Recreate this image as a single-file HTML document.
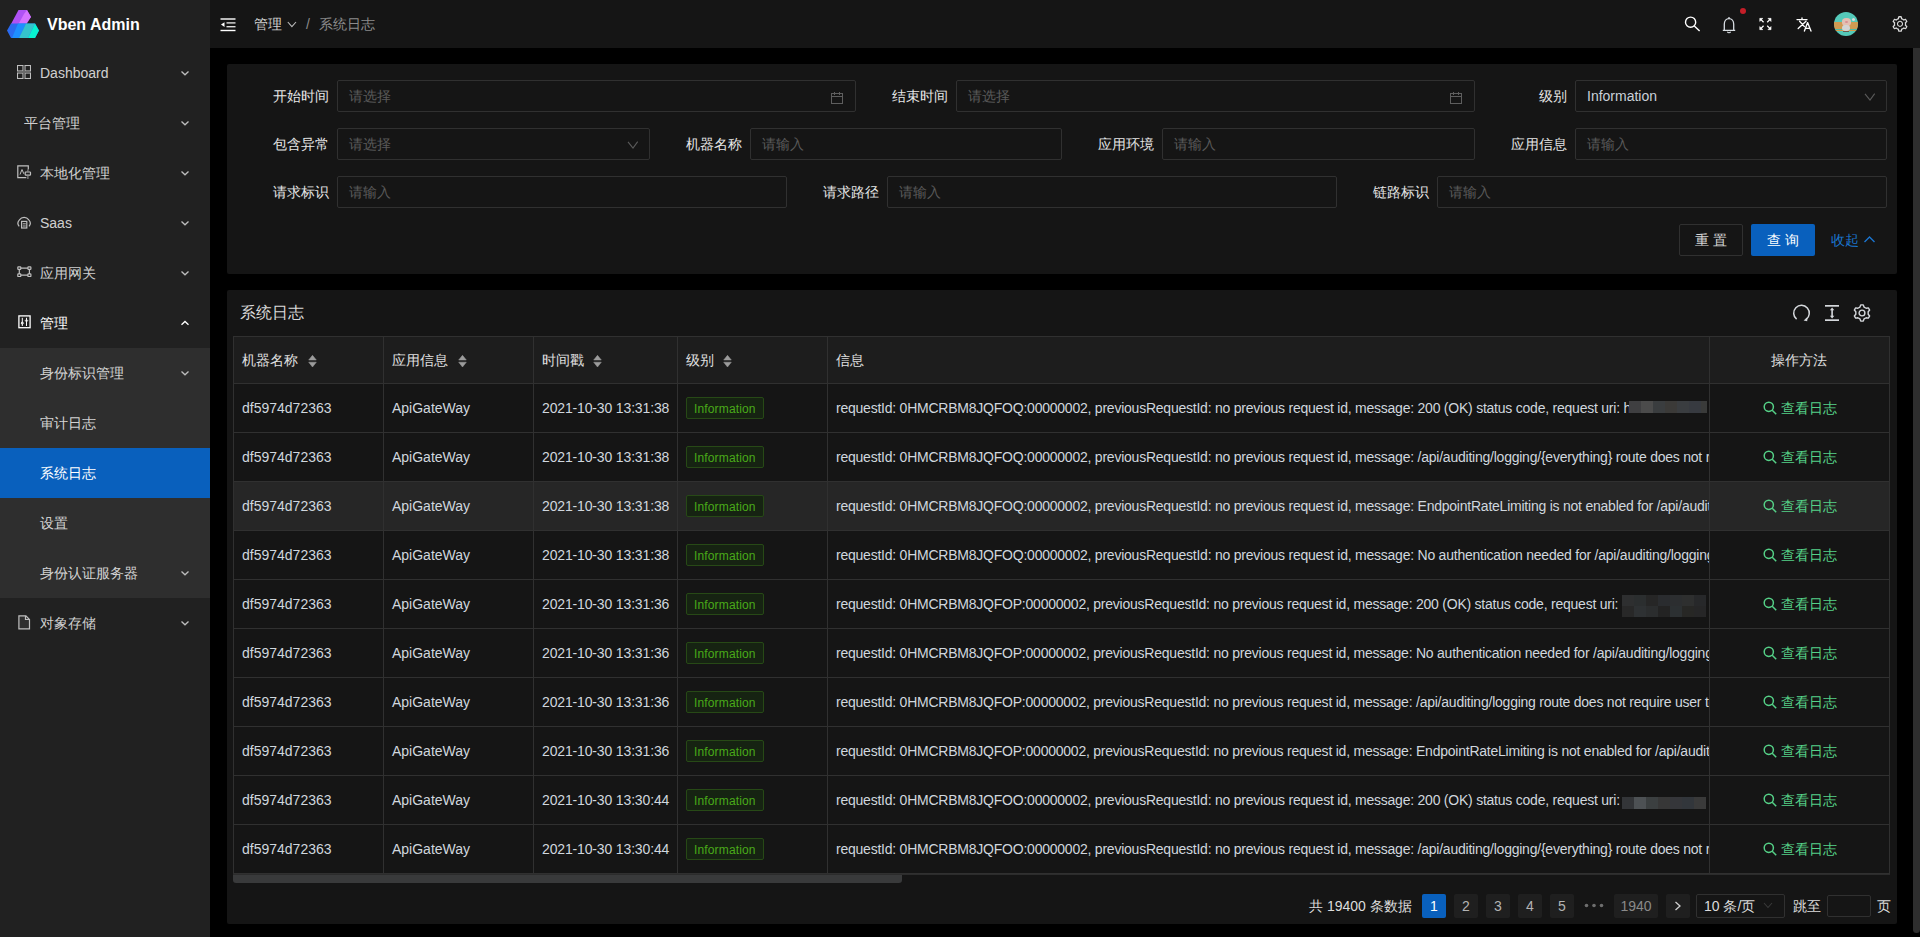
<!DOCTYPE html>
<html><head><meta charset="utf-8">
<style>
*{margin:0;padding:0;box-sizing:border-box}
html,body{width:1920px;height:937px;overflow:hidden;background:#000;font-family:"Liberation Sans",sans-serif;font-size:14px;color:#c9d1d9}
.abs{position:absolute}
#side{position:absolute;left:0;top:0;width:210px;height:937px;background:#212121}
#sub{position:absolute;left:0;top:348px;width:210px;height:250px;background:#2e2e2e}
.mi{position:absolute;left:0;width:210px;height:50px;line-height:50px;color:rgba(255,255,255,.7);font-size:14px;white-space:nowrap}
.mi .t{position:absolute;left:40px;top:0}
.mi svg.ic{position:absolute;left:17px;top:18px}
.mi svg.ch{position:absolute;left:179px;top:21px}
#hdr{position:absolute;left:210px;top:0;width:1710px;height:48px;background:#151515}
.card{position:absolute;background:#151515;border-radius:2px}
.lbl{position:absolute;height:32px;line-height:32px;color:#e6e6e6;text-align:right;white-space:nowrap}
.inp{position:absolute;height:32px;border:1px solid #303030;border-radius:2px;line-height:30px;padding-left:11px;color:#5a5a5a;white-space:nowrap}
.btn{position:absolute;height:32px;line-height:30px;border-radius:2px;text-align:center;white-space:nowrap}
.th{line-height:20px;color:#e0e0e0;white-space:nowrap}
.td{line-height:20px;color:#d0d7de;white-space:nowrap}
.tag{height:22px;line-height:22px;letter-spacing:.15px;padding:0 7px;font-size:12px;color:#49aa19;background:#162312;border:1px solid #274916;border-radius:2px;white-space:nowrap}
.pg{top:894px;width:24px;height:24px;line-height:24px;text-align:center;background:#1f1f1f;color:#b4b4b4;border-radius:2px}
#scrollv{position:absolute;left:1913px;top:48px;width:7px;height:885px;background:#2e2e2e;border-radius:0 0 4px 4px}
</style></head>
<body>
<!-- SIDEBAR -->
<div id="side">
  <svg class="abs" style="left:7px;top:9px" width="33" height="30" viewBox="0 0 33 30">
    <polygon points="4,15 11.5,1 20,1 24,8 18,15" fill="#b052f5"/>
    <polygon points="11.5,15 17,5 20,1 24,8 19.5,15" fill="#d673ff"/>
    <polygon points="4,14.5 28,14.5 32,21.5 28,29 4,29 0,21.5" fill="#2a6bf0"/>
    <polygon points="11,14.5 19,14.5 12,29 5,29" fill="#1e8fff"/>
    <polygon points="19,14.5 28,14.5 21,29 12,29" fill="#35c3cb"/>
    <polygon points="28,14.5 32,21.5 28,29 21,29" fill="#08f2d0"/>
  </svg>
  <div class="abs" style="left:47px;top:15px;font-size:16px;font-weight:bold;color:#fff;line-height:20px">Vben Admin</div>
  <div class="abs" style="left:40px;top:48px;height:50px;line-height:50px;color:rgba(255,255,255,.8);white-space:nowrap">Dashboard</div><svg class="abs" style="left:17px;top:65px" width="14" height="14" viewBox="0 0 14 14" fill="none" stroke="#bfbfbf" stroke-width="1.1"><rect x="0.5" y="0.5" width="5.5" height="5.5"/><rect x="8" y="0.5" width="5.5" height="5.5"/><rect x="0.5" y="8" width="5.5" height="5.5"/><rect x="8" y="8" width="5.5" height="5.5"/><path d="M7 1v12M1 7h12" stroke="#6a6a6a" stroke-width="1.6"/></svg><svg class="abs" style="left:178px;top:70px" width="14" height="8" viewBox="0 0 14 8"><polyline points="3.5,1.5 7,4.8 10.5,1.5" fill="none" stroke="#bdbdbd" stroke-width="1.3"/></svg><div class="abs" style="left:24px;top:98px;height:50px;line-height:50px;color:rgba(255,255,255,.8);white-space:nowrap">平台管理</div><svg class="abs" style="left:178px;top:120px" width="14" height="8" viewBox="0 0 14 8"><polyline points="3.5,1.5 7,4.8 10.5,1.5" fill="none" stroke="#bdbdbd" stroke-width="1.3"/></svg><div class="abs" style="left:40px;top:148px;height:50px;line-height:50px;color:rgba(255,255,255,.8);white-space:nowrap">本地化管理</div><svg class="abs" style="left:17px;top:165px" width="15" height="15" viewBox="0 0 15 15" fill="none" stroke="#bfbfbf" stroke-width="1.2"><path d="M11.3 4.5V0.8H0.8v11.9h8.5"/><path d="M3 9.5l2-5 1.8 4.3" stroke-width="1"/><rect x="8.2" y="7" width="5.3" height="3.2" rx="0.6"/><path d="M10.9 4.5v2.5M10.9 10.2v3.8" stroke="#8a8a8a"/></svg><svg class="abs" style="left:178px;top:170px" width="14" height="8" viewBox="0 0 14 8"><polyline points="3.5,1.5 7,4.8 10.5,1.5" fill="none" stroke="#bdbdbd" stroke-width="1.3"/></svg><div class="abs" style="left:40px;top:198px;height:50px;line-height:50px;color:rgba(255,255,255,.8);white-space:nowrap">Saas</div><svg class="abs" style="left:17px;top:215px" width="15" height="14" viewBox="0 0 15 14" fill="none" stroke="#bfbfbf" stroke-width="1.2"><path d="M2.2 11.3C0.6 9.5 0.6 6.8 2.4 4.8 3.6 3.2 5.3 2.4 7.1 2.4s3.5.8 4.7 2.4c1.8 2 1.8 4.7.2 6.5"/><rect x="4.6" y="6.4" width="5.2" height="6.6"/><path d="M5.8 8.8h3M5.8 11h3" stroke-width="1"/></svg><svg class="abs" style="left:178px;top:220px" width="14" height="8" viewBox="0 0 14 8"><polyline points="3.5,1.5 7,4.8 10.5,1.5" fill="none" stroke="#bdbdbd" stroke-width="1.3"/></svg><div class="abs" style="left:40px;top:248px;height:50px;line-height:50px;color:rgba(255,255,255,.8);white-space:nowrap">应用网关</div><svg class="abs" style="left:17px;top:266px" width="15" height="12" viewBox="0 0 15 12" fill="none" stroke="#bfbfbf" stroke-width="1.2"><rect x="0.8" y="0.8" width="3" height="2.6" rx=".6"/><rect x="10.9" y="0.8" width="3" height="2.6" rx=".6"/><rect x="0.8" y="7.9" width="3" height="2.6" rx=".6"/><rect x="10.9" y="7.9" width="3" height="2.6" rx=".6"/><path d="M3.8 2.1h7.1M3.8 9.2h7.1M2.3 3.4v4.5M12.4 3.4v4.5"/></svg><svg class="abs" style="left:178px;top:270px" width="14" height="8" viewBox="0 0 14 8"><polyline points="3.5,1.5 7,4.8 10.5,1.5" fill="none" stroke="#bdbdbd" stroke-width="1.3"/></svg><div class="abs" style="left:40px;top:298px;height:50px;line-height:50px;color:#fff;white-space:nowrap">管理</div><svg class="abs" style="left:18px;top:315px" width="13" height="14" viewBox="0 0 13 14" fill="none" stroke="#fff" stroke-width="1.3"><rect x="0.9" y="0.9" width="11.2" height="11.8"/><path d="M4.3 2.8v8.2M8.5 2.8v8.2" stroke-width="1"/><path d="M4.3 6.8l1.2 1.3-1.2 1.3-1.2-1.3z M8.5 4.3l1.2 1.3-1.2 1.3-1.2-1.3z" stroke-width="1"/></svg><svg class="abs" style="left:178px;top:320px" width="14" height="8" viewBox="0 0 14 8"><polyline points="3.5,4.8 7,1.5 10.5,4.8" fill="none" stroke="#fff" stroke-width="1.3"/></svg><div class="abs" style="left:0;top:348px;width:210px;height:250px;background:#2e2e2e"></div><div class="abs" style="left:0;top:448px;width:210px;height:50px;background:#0960bd"></div><div class="abs" style="left:40px;top:348px;height:50px;line-height:50px;color:rgba(255,255,255,.8);white-space:nowrap">身份标识管理</div><svg class="abs" style="left:178px;top:370px" width="14" height="8" viewBox="0 0 14 8"><polyline points="3.5,1.5 7,4.8 10.5,1.5" fill="none" stroke="#bdbdbd" stroke-width="1.3"/></svg><div class="abs" style="left:40px;top:398px;height:50px;line-height:50px;color:rgba(255,255,255,.8);white-space:nowrap">审计日志</div><div class="abs" style="left:40px;top:448px;height:50px;line-height:50px;color:#fff;white-space:nowrap">系统日志</div><div class="abs" style="left:40px;top:498px;height:50px;line-height:50px;color:rgba(255,255,255,.8);white-space:nowrap">设置</div><div class="abs" style="left:40px;top:548px;height:50px;line-height:50px;color:rgba(255,255,255,.8);white-space:nowrap">身份认证服务器</div><svg class="abs" style="left:178px;top:570px" width="14" height="8" viewBox="0 0 14 8"><polyline points="3.5,1.5 7,4.8 10.5,1.5" fill="none" stroke="#bdbdbd" stroke-width="1.3"/></svg><div class="abs" style="left:40px;top:598px;height:50px;line-height:50px;color:rgba(255,255,255,.8);white-space:nowrap">对象存储</div><svg class="abs" style="left:18px;top:615px" width="13" height="15" viewBox="0 0 13 15" fill="none" stroke="#bfbfbf" stroke-width="1.2"><path d="M0.9 0.9h7l3.6 3.6v9.3H0.9z" fill="#2f2f2f"/><path d="M7.5 0.9v3.6h4"/></svg><svg class="abs" style="left:178px;top:620px" width="14" height="8" viewBox="0 0 14 8"><polyline points="3.5,1.5 7,4.8 10.5,1.5" fill="none" stroke="#bdbdbd" stroke-width="1.3"/></svg>
</div>
<div id="hdr"></div>
<svg class="abs" style="left:220px;top:17px" width="16" height="15" viewBox="0 0 16 15" fill="#fff"><rect x="0.5" y="1.3" width="15" height="1.4"/><rect x="6.5" y="5.2" width="9" height="1.4" fill="#ddd"/><rect x="6.5" y="9" width="9" height="1.4" fill="#ddd"/><rect x="0.5" y="12.8" width="15" height="1.4"/><polygon points="1,7.6 4.5,5.2 4.5,10"/></svg>
<div class="abs" style="left:254px;top:14px;line-height:20px;color:#d0d0d0">管理</div>
<svg class="abs" style="left:286px;top:20px" width="12" height="9" viewBox="0 0 12 9"><polyline points="1.8,2 5.9,6.6 10,2" fill="none" stroke="#bbb" stroke-width="1.1"/></svg>
<div class="abs" style="left:306px;top:14px;line-height:20px;color:#8b8b8b">/</div>
<div class="abs" style="left:319px;top:14px;line-height:20px;color:#8b8b8b">系统日志</div>
<svg class="abs" style="left:1683px;top:15px" width="18" height="18" viewBox="0 0 18 18" fill="none" stroke="#fff" stroke-width="1.4"><circle cx="7.6" cy="7.2" r="5.1"/><path d="M11.3 11l5.3 5"/></svg>
<svg class="abs" style="left:1722px;top:16px" width="14" height="18" viewBox="0 0 14 18" fill="none" stroke="#d8dde2" stroke-width="1.3"><path d="M2.3 14.3V8.2C2.3 5 4.3 2.7 7 2.7s4.7 2.3 4.7 5.5v6.1M0.8 14.3h12.4"/><path d="M7 1v1.7" stroke-width="1.3"/><path d="M5.4 15.8a1.7 1.5 0 0 0 3.2 0" stroke-width="1.1"/></svg>
<div class="abs" style="left:1740px;top:8px;width:6px;height:6px;border-radius:50%;background:#c41e28"></div>
<svg class="abs" style="left:1757px;top:16px" width="16" height="16" viewBox="0 0 16 16" fill="#fff" stroke="#fff" stroke-width="1.5"><g transform="translate(8.4 8) scale(.87) translate(-8.3 -8.1)"><path d="M3 2.8l3.2 3.2M13.6 2.8l-3.2 3.2M3 13.4l3.2-3.2M13.6 13.4l-3.2-3.2" fill="none"/><path d="M1.8 1.6h3.6L1.8 5.2zM14.8 1.6h-3.6l3.6 3.6zM1.8 14.6h3.6L1.8 11zM14.8 14.6h-3.6l3.6-3.6z" stroke-width="0.6" stroke-linejoin="round"/></g></svg>
<svg class="abs" style="left:1790px;top:8px" width="26" height="30" viewBox="1790 8 26 30" fill="none" stroke="#fff" stroke-width="1.35" stroke-linecap="round"><path d="M1797 19.6H1807M1802 17.9v1.7M1799.6 21.3l4.8 5.3M1806 21.3l-7.8 7.2"/><path d="M1804.4 31l3.2-8.4 3.4 8.4M1805.5 28.4h4.3" stroke-linejoin="round"/></svg>
<div class="abs" style="left:1834px;top:12px;width:24px;height:24px;border-radius:50%;background:#54c9b9;overflow:hidden">
  <div class="abs" style="left:0;top:9.5px;width:24px;height:7px;background:#cf9a52"></div>
  <div class="abs" style="left:1px;top:16.5px;width:22px;height:2px;background:#4fb8a6"></div>
  <div class="abs" style="left:1px;top:18.3px;width:22px;height:1px;background:#d39c4c"></div>
  <div class="abs" style="left:7.5px;top:5.5px;width:9px;height:8px;border-radius:45%;background:#e3bfb2"></div>
  <div class="abs" style="left:10.5px;top:8.5px;width:3px;height:2px;border-radius:50%;background:#d88f92"></div>
  <div class="abs" style="left:8px;top:12.5px;width:8px;height:6px;border-radius:3px;background:#d4d4d4"></div>
  <div class="abs" style="left:9px;top:18.5px;width:6px;height:1.5px;background:#6a5a4c"></div>
  <div class="abs" style="left:17.5px;top:5.5px;width:3.5px;height:3.5px;border-radius:50%;background:#dcdcdc"></div>
</div>
<svg class="abs" style="left:1891px;top:15px" width="18" height="18" viewBox="0 0 1024 1024" fill="#d9d9d9"><path d="M924.8 625.7l-65.5-56c3.1-19 4.7-38.4 4.7-57.8s-1.6-38.8-4.7-57.8l65.5-56a32.030 32.030 0 0 0 9.3-35.200l-.9-2.600a443.740 443.740 0 0 0-79.700-137.900l-1.800-2.100a32.120 32.120 0 0 0-35.100-9.500l-81.300 28.900c-30-24.600-63.500-44-99.700-57.600l-15.700-85a32.050 32.050 0 0 0-25.800-25.700l-2.700-.5c-52.100-9.400-106.900-9.400-159 0l-2.700.5a32.050 32.050 0 0 0-25.800 25.700l-15.800 85.400a351.860 351.860 0 0 0-99 57.400l-81.900-29.100a32 32 0 0 0-35.100 9.500l-1.800 2.100a446.020 446.020 0 0 0-79.700 137.900l-.9 2.600c-4.500 12.500-.8 26.500 9.300 35.200l66.300 56.600c-3.100 18.800-4.600 38-4.600 57.100 0 19.200 1.500 38.400 4.600 57.100L99 625.500a32.030 32.030 0 0 0-9.300 35.200l.9 2.600c18.100 50.400 44.900 96.900 79.700 137.900l1.800 2.100a32.120 32.120 0 0 0 35.100 9.500l81.900-29.100c29.800 24.500 63.100 43.900 99 57.400l15.800 85.400a32.050 32.050 0 0 0 25.800 25.700l2.700.5a449.400 449.400 0 0 0 159 0l2.700-.5a32.050 32.050 0 0 0 25.800-25.700l15.700-85a350 350 0 0 0 99.700-57.600l81.300 28.900a32 32 0 0 0 35.100-9.500l1.800-2.100c34.800-41.100 61.600-87.500 79.700-137.900l.9-2.600c4.500-12.300.8-26.300-9.300-35zM788.300 465.900c2.500 15.100 3.800 30.600 3.800 46.100s-1.300 31-3.800 46.100l-6.600 40.100 74.700 63.900a370.030 370.030 0 0 1-42.600 73.600L721 702.800l-31.400 25.800c-23.900 19.600-50.500 35-79.300 45.800l-38.100 14.300-17.900 97a377.500 377.500 0 0 1-85 0l-17.900-97.200-37.800-14.500c-28.500-10.800-55-26.200-78.700-45.700l-31.400-25.900-93.400 33.200c-17-22.900-31.200-47.600-42.600-73.600l75.500-64.500-6.500-40c-2.400-14.900-3.700-30.300-3.700-45.500 0-15.300 1.200-30.600 3.700-45.500l6.500-40-75.500-64.500c11.300-26.100 25.600-50.700 42.600-73.600l93.400 33.200 31.400-25.900c23.700-19.500 50.200-34.900 78.700-45.700l37.900-14.300 17.900-97.200c28.100-3.200 56.800-3.200 85 0l17.900 97 38.100 14.300c28.700 10.800 55.400 26.200 79.300 45.800l31.400 25.800 92.800-32.900c17 22.900 31.200 47.600 42.600 73.600L781.800 426l6.500 39.900zM512 326c-97.200 0-176 78.800-176 176s78.800 176 176 176 176-78.800 176-176-78.800-176-176-176zm79.200 255.200A111.600 111.600 0 0 1 512 614c-29.900 0-58-11.700-79.200-32.800A111.600 111.600 0 0 1 400 502c0-29.900 11.700-58 32.800-79.200C454 401.600 482.100 390 512 390c29.900 0 58 11.600 79.200 32.800A111.600 111.600 0 0 1 624 502c0 29.900-11.700 58-32.800 79.200z"/></svg>

<div class="card" style="left:227px;top:64px;width:1670px;height:210px"></div>
<div class="lbl" style="left:229px;width:100px;top:80px;padding-right:0">开始时间</div><div class="inp" style="left:337px;top:80px;width:519px">请选择</div><svg class="abs" style="left:830px;top:91px" width="14" height="14" viewBox="0 0 14 14" fill="none" stroke="#5e5e5e" stroke-width="1"><rect x="1.5" y="2.5" width="11" height="10"/><path d="M1.5 5.5h11M4.5 1v3M9.5 1v3"/></svg><div class="lbl" style="left:848px;width:100px;top:80px;padding-right:0">结束时间</div><div class="inp" style="left:956px;top:80px;width:519px">请选择</div><svg class="abs" style="left:1449px;top:91px" width="14" height="14" viewBox="0 0 14 14" fill="none" stroke="#5e5e5e" stroke-width="1"><rect x="1.5" y="2.5" width="11" height="10"/><path d="M1.5 5.5h11M4.5 1v3M9.5 1v3"/></svg><div class="lbl" style="left:1467px;width:100px;top:80px;padding-right:0">级别</div><div class="inp" style="left:1575px;top:80px;width:312px"><span style="color:#c9d1d9">Information</span></div><svg class="abs" style="left:1864px;top:92.5px" width="12" height="8" viewBox="0 0 12 8"><polyline points="1,0.8 6,7 10.7,0.6" fill="none" stroke="#5a5a5a" stroke-width="1.1"/></svg><div class="lbl" style="left:229px;width:100px;top:128px;padding-right:0">包含异常</div><div class="inp" style="left:337px;top:128px;width:313px">请选择</div><svg class="abs" style="left:627px;top:140.5px" width="12" height="8" viewBox="0 0 12 8"><polyline points="1,0.8 6,7 10.7,0.6" fill="none" stroke="#5a5a5a" stroke-width="1.1"/></svg><div class="lbl" style="left:642px;width:100px;top:128px;padding-right:0">机器名称</div><div class="inp" style="left:750px;top:128px;width:312px">请输入</div><div class="lbl" style="left:1054px;width:100px;top:128px;padding-right:0">应用环境</div><div class="inp" style="left:1162px;top:128px;width:313px">请输入</div><div class="lbl" style="left:1467px;width:100px;top:128px;padding-right:0">应用信息</div><div class="inp" style="left:1575px;top:128px;width:312px">请输入</div><div class="lbl" style="left:229px;width:100px;top:176px;padding-right:0">请求标识</div><div class="inp" style="left:337px;top:176px;width:450px">请输入</div><div class="lbl" style="left:779px;width:100px;top:176px;padding-right:0">请求路径</div><div class="inp" style="left:887px;top:176px;width:450px">请输入</div><div class="lbl" style="left:1329px;width:100px;top:176px;padding-right:0">链路标识</div><div class="inp" style="left:1437px;top:176px;width:450px">请输入</div><div class="btn" style="left:1679px;top:224px;width:64px;border:1px solid #303030;color:#d6d6d6">重 置</div><div class="btn" style="left:1751px;top:224px;width:64px;background:#0960bd;color:#fff;line-height:32px">查 询</div><div class="abs" style="left:1831px;top:230px;line-height:20px;color:#1b75d0">收起</div><svg class="abs" style="left:1863px;top:235px" width="13" height="9" viewBox="0 0 13 9"><polyline points="1.5,7 6.5,2 11.5,7" fill="none" stroke="#1b75d0" stroke-width="1.4"/></svg>





















<!--TABLE-->
<div class="card" style="left:227px;top:290px;width:1670px;height:634px"></div>
<div class="abs" style="left:240px;top:303px;font-size:16px;line-height:20px;color:#d9d9d9">系统日志</div>
<svg class="abs" style="left:1792px;top:304px" width="19" height="19" viewBox="0 0 19 19" fill="none" stroke="#d5d8dc" stroke-width="1.5"><path d="M4.6 15.2A7.8 7.8 0 1 1 14.1 15.4"/><polygon points="15.6,13 15.2,17.2 11.6,16.4" fill="#d5d8dc" stroke="none"/></svg>
<svg class="abs" style="left:1825px;top:304px" width="15" height="18" viewBox="0 0 15 18" fill="#d5d8dc"><rect x="0" y="1" width="14" height="1.7"/><rect x="0" y="15.3" width="14" height="1.7"/><rect x="6.3" y="5" width="1.6" height="8"/><polygon points="7.1,3.6 9.3,6.2 4.9,6.2"/><polygon points="7.1,14.4 9.3,11.8 4.9,11.8"/></svg>
<svg class="abs" style="left:1853px;top:304px" width="18" height="18" viewBox="0 0 18 18" fill="none" stroke="#d5d8dc" stroke-width="1.4" stroke-linejoin="round"><path d="M7.72,0.90 L10.28,0.90 L11.05,3.04 L13.13,4.25 L15.37,3.84 L16.66,6.06 L15.18,7.80 L15.18,10.20 L16.66,11.94 L15.37,14.16 L13.13,13.75 L11.05,14.96 L10.28,17.10 L7.72,17.10 L6.95,14.96 L4.87,13.75 L2.63,14.16 L1.34,11.94 L2.82,10.20 L2.82,7.80 L1.34,6.06 L2.63,3.84 L4.87,4.25 L6.95,3.04Z"/><circle cx="9" cy="9" r="2.9"/></svg>
<div class="abs" style="left:233px;top:336px;width:1657px;height:47px;background:#1d1d1d"></div>
<div class="abs" style="left:233px;top:482px;width:1657px;height:48px;background:#262626"></div>
<div class="abs" style="left:233px;top:336px;width:1657px;height:1px;background:#303030"></div>
<div class="abs" style="left:233px;top:383px;width:1657px;height:1px;background:#303030"></div>
<div class="abs" style="left:233px;top:432px;width:1657px;height:1px;background:#303030"></div>
<div class="abs" style="left:233px;top:481px;width:1657px;height:1px;background:#303030"></div>
<div class="abs" style="left:233px;top:530px;width:1657px;height:1px;background:#303030"></div>
<div class="abs" style="left:233px;top:579px;width:1657px;height:1px;background:#303030"></div>
<div class="abs" style="left:233px;top:628px;width:1657px;height:1px;background:#303030"></div>
<div class="abs" style="left:233px;top:677px;width:1657px;height:1px;background:#303030"></div>
<div class="abs" style="left:233px;top:726px;width:1657px;height:1px;background:#303030"></div>
<div class="abs" style="left:233px;top:775px;width:1657px;height:1px;background:#303030"></div>
<div class="abs" style="left:233px;top:824px;width:1657px;height:1px;background:#303030"></div>
<div class="abs" style="left:233px;top:873px;width:1657px;height:1px;background:#303030"></div>
<div class="abs" style="left:233px;top:336px;width:1px;height:537px;background:#303030"></div>
<div class="abs" style="left:383px;top:336px;width:1px;height:537px;background:#303030"></div>
<div class="abs" style="left:533px;top:336px;width:1px;height:537px;background:#303030"></div>
<div class="abs" style="left:677px;top:336px;width:1px;height:537px;background:#303030"></div>
<div class="abs" style="left:827px;top:336px;width:1px;height:537px;background:#303030"></div>
<div class="abs" style="left:1709px;top:336px;width:1px;height:537px;background:#303030"></div>
<div class="abs" style="left:1889px;top:336px;width:1px;height:537px;background:#303030"></div>
<div class="abs" style="left:233px;top:874px;width:1657px;height:1px;background:#2c2c2c"></div>
<div class="abs" style="left:233px;top:875px;width:669px;height:8px;background:#393a3b;border-radius:0 0 3px 3px"></div>
<div class="abs th" style="left:242px;top:350px">机器名称</div>
<svg class="abs" style="left:308px;top:355px" width="9" height="13" viewBox="0 0 9 13" fill="#9c9c9c" stroke="#9c9c9c" stroke-width=".5" stroke-linejoin="round"><polygon points="4.5,0.3 8.3,5 0.7,5"/><polygon points="4.5,12 8.3,7.2 0.7,7.2"/></svg>
<div class="abs th" style="left:392px;top:350px">应用信息</div>
<svg class="abs" style="left:458px;top:355px" width="9" height="13" viewBox="0 0 9 13" fill="#9c9c9c" stroke="#9c9c9c" stroke-width=".5" stroke-linejoin="round"><polygon points="4.5,0.3 8.3,5 0.7,5"/><polygon points="4.5,12 8.3,7.2 0.7,7.2"/></svg>
<div class="abs th" style="left:542px;top:350px">时间戳</div>
<svg class="abs" style="left:593px;top:355px" width="9" height="13" viewBox="0 0 9 13" fill="#9c9c9c" stroke="#9c9c9c" stroke-width=".5" stroke-linejoin="round"><polygon points="4.5,0.3 8.3,5 0.7,5"/><polygon points="4.5,12 8.3,7.2 0.7,7.2"/></svg>
<div class="abs th" style="left:686px;top:350px">级别</div>
<svg class="abs" style="left:723px;top:355px" width="9" height="13" viewBox="0 0 9 13" fill="#9c9c9c" stroke="#9c9c9c" stroke-width=".5" stroke-linejoin="round"><polygon points="4.5,0.3 8.3,5 0.7,5"/><polygon points="4.5,12 8.3,7.2 0.7,7.2"/></svg>
<div class="abs th" style="left:836px;top:350px">信息</div>
<div class="abs th" style="left:1771px;top:350px">操作方法</div>
<div class="abs td" style="left:242px;top:398px">df5974d72363</div>
<div class="abs td" style="left:392px;top:398px">ApiGateWay</div>
<div class="abs td" style="left:542px;top:398px;letter-spacing:-.15px">2021-10-30 13:31:38</div>
<div class="abs tag" style="left:686px;top:397px">Information</div>
<div class="abs td" style="left:836px;top:398px;width:873px;overflow:hidden;letter-spacing:-.23px">requestId: 0HMCRBM8JQFOQ:00000002, previousRequestId: no previous request id, message: 200 (OK) status code, request uri: h</div>
<svg class="abs" style="left:1763px;top:401px" width="14" height="14" viewBox="0 0 14 14" fill="none" stroke="#55d187" stroke-width="1.5"><circle cx="5.8" cy="5.8" r="4.6"/><path d="M9.2 9.2l4 4"/></svg>
<div class="abs td" style="left:1781px;top:398px;color:#55d187">查看日志</div>
<div class="abs td" style="left:242px;top:447px">df5974d72363</div>
<div class="abs td" style="left:392px;top:447px">ApiGateWay</div>
<div class="abs td" style="left:542px;top:447px;letter-spacing:-.15px">2021-10-30 13:31:38</div>
<div class="abs tag" style="left:686px;top:446px">Information</div>
<div class="abs td" style="left:836px;top:447px;width:873px;overflow:hidden;letter-spacing:-.23px">requestId: 0HMCRBM8JQFOQ:00000002, previousRequestId: no previous request id, message: /api/auditing/logging/{everything} route does not require user to be authenticated</div>
<svg class="abs" style="left:1763px;top:450px" width="14" height="14" viewBox="0 0 14 14" fill="none" stroke="#55d187" stroke-width="1.5"><circle cx="5.8" cy="5.8" r="4.6"/><path d="M9.2 9.2l4 4"/></svg>
<div class="abs td" style="left:1781px;top:447px;color:#55d187">查看日志</div>
<div class="abs td" style="left:242px;top:496px">df5974d72363</div>
<div class="abs td" style="left:392px;top:496px">ApiGateWay</div>
<div class="abs td" style="left:542px;top:496px;letter-spacing:-.15px">2021-10-30 13:31:38</div>
<div class="abs tag" style="left:686px;top:495px">Information</div>
<div class="abs td" style="left:836px;top:496px;width:873px;overflow:hidden;letter-spacing:-.23px">requestId: 0HMCRBM8JQFOQ:00000002, previousRequestId: no previous request id, message: EndpointRateLimiting is not enabled for /api/auditing/logging</div>
<svg class="abs" style="left:1763px;top:499px" width="14" height="14" viewBox="0 0 14 14" fill="none" stroke="#55d187" stroke-width="1.5"><circle cx="5.8" cy="5.8" r="4.6"/><path d="M9.2 9.2l4 4"/></svg>
<div class="abs td" style="left:1781px;top:496px;color:#55d187">查看日志</div>
<div class="abs td" style="left:242px;top:545px">df5974d72363</div>
<div class="abs td" style="left:392px;top:545px">ApiGateWay</div>
<div class="abs td" style="left:542px;top:545px;letter-spacing:-.15px">2021-10-30 13:31:38</div>
<div class="abs tag" style="left:686px;top:544px">Information</div>
<div class="abs td" style="left:836px;top:545px;width:873px;overflow:hidden;letter-spacing:-.23px">requestId: 0HMCRBM8JQFOQ:00000002, previousRequestId: no previous request id, message: No authentication needed for /api/auditing/logging</div>
<svg class="abs" style="left:1763px;top:548px" width="14" height="14" viewBox="0 0 14 14" fill="none" stroke="#55d187" stroke-width="1.5"><circle cx="5.8" cy="5.8" r="4.6"/><path d="M9.2 9.2l4 4"/></svg>
<div class="abs td" style="left:1781px;top:545px;color:#55d187">查看日志</div>
<div class="abs td" style="left:242px;top:594px">df5974d72363</div>
<div class="abs td" style="left:392px;top:594px">ApiGateWay</div>
<div class="abs td" style="left:542px;top:594px;letter-spacing:-.15px">2021-10-30 13:31:36</div>
<div class="abs tag" style="left:686px;top:593px">Information</div>
<div class="abs td" style="left:836px;top:594px;width:873px;overflow:hidden;letter-spacing:-.23px">requestId: 0HMCRBM8JQFOP:00000002, previousRequestId: no previous request id, message: 200 (OK) status code, request uri: </div>
<svg class="abs" style="left:1763px;top:597px" width="14" height="14" viewBox="0 0 14 14" fill="none" stroke="#55d187" stroke-width="1.5"><circle cx="5.8" cy="5.8" r="4.6"/><path d="M9.2 9.2l4 4"/></svg>
<div class="abs td" style="left:1781px;top:594px;color:#55d187">查看日志</div>
<div class="abs td" style="left:242px;top:643px">df5974d72363</div>
<div class="abs td" style="left:392px;top:643px">ApiGateWay</div>
<div class="abs td" style="left:542px;top:643px;letter-spacing:-.15px">2021-10-30 13:31:36</div>
<div class="abs tag" style="left:686px;top:642px">Information</div>
<div class="abs td" style="left:836px;top:643px;width:873px;overflow:hidden;letter-spacing:-.23px">requestId: 0HMCRBM8JQFOP:00000002, previousRequestId: no previous request id, message: No authentication needed for /api/auditing/logging</div>
<svg class="abs" style="left:1763px;top:646px" width="14" height="14" viewBox="0 0 14 14" fill="none" stroke="#55d187" stroke-width="1.5"><circle cx="5.8" cy="5.8" r="4.6"/><path d="M9.2 9.2l4 4"/></svg>
<div class="abs td" style="left:1781px;top:643px;color:#55d187">查看日志</div>
<div class="abs td" style="left:242px;top:692px">df5974d72363</div>
<div class="abs td" style="left:392px;top:692px">ApiGateWay</div>
<div class="abs td" style="left:542px;top:692px;letter-spacing:-.15px">2021-10-30 13:31:36</div>
<div class="abs tag" style="left:686px;top:691px">Information</div>
<div class="abs td" style="left:836px;top:692px;width:873px;overflow:hidden;letter-spacing:-.23px">requestId: 0HMCRBM8JQFOP:00000002, previousRequestId: no previous request id, message: /api/auditing/logging route does not require user to be authenticated</div>
<svg class="abs" style="left:1763px;top:695px" width="14" height="14" viewBox="0 0 14 14" fill="none" stroke="#55d187" stroke-width="1.5"><circle cx="5.8" cy="5.8" r="4.6"/><path d="M9.2 9.2l4 4"/></svg>
<div class="abs td" style="left:1781px;top:692px;color:#55d187">查看日志</div>
<div class="abs td" style="left:242px;top:741px">df5974d72363</div>
<div class="abs td" style="left:392px;top:741px">ApiGateWay</div>
<div class="abs td" style="left:542px;top:741px;letter-spacing:-.15px">2021-10-30 13:31:36</div>
<div class="abs tag" style="left:686px;top:740px">Information</div>
<div class="abs td" style="left:836px;top:741px;width:873px;overflow:hidden;letter-spacing:-.23px">requestId: 0HMCRBM8JQFOP:00000002, previousRequestId: no previous request id, message: EndpointRateLimiting is not enabled for /api/auditing/logging</div>
<svg class="abs" style="left:1763px;top:744px" width="14" height="14" viewBox="0 0 14 14" fill="none" stroke="#55d187" stroke-width="1.5"><circle cx="5.8" cy="5.8" r="4.6"/><path d="M9.2 9.2l4 4"/></svg>
<div class="abs td" style="left:1781px;top:741px;color:#55d187">查看日志</div>
<div class="abs td" style="left:242px;top:790px">df5974d72363</div>
<div class="abs td" style="left:392px;top:790px">ApiGateWay</div>
<div class="abs td" style="left:542px;top:790px;letter-spacing:-.15px">2021-10-30 13:30:44</div>
<div class="abs tag" style="left:686px;top:789px">Information</div>
<div class="abs td" style="left:836px;top:790px;width:873px;overflow:hidden;letter-spacing:-.23px">requestId: 0HMCRBM8JQFOO:00000002, previousRequestId: no previous request id, message: 200 (OK) status code, request uri:</div>
<svg class="abs" style="left:1763px;top:793px" width="14" height="14" viewBox="0 0 14 14" fill="none" stroke="#55d187" stroke-width="1.5"><circle cx="5.8" cy="5.8" r="4.6"/><path d="M9.2 9.2l4 4"/></svg>
<div class="abs td" style="left:1781px;top:790px;color:#55d187">查看日志</div>
<div class="abs td" style="left:242px;top:839px">df5974d72363</div>
<div class="abs td" style="left:392px;top:839px">ApiGateWay</div>
<div class="abs td" style="left:542px;top:839px;letter-spacing:-.15px">2021-10-30 13:30:44</div>
<div class="abs tag" style="left:686px;top:838px">Information</div>
<div class="abs td" style="left:836px;top:839px;width:873px;overflow:hidden;letter-spacing:-.23px">requestId: 0HMCRBM8JQFOO:00000002, previousRequestId: no previous request id, message: /api/auditing/logging/{everything} route does not require user to be authenticated</div>
<svg class="abs" style="left:1763px;top:842px" width="14" height="14" viewBox="0 0 14 14" fill="none" stroke="#55d187" stroke-width="1.5"><circle cx="5.8" cy="5.8" r="4.6"/><path d="M9.2 9.2l4 4"/></svg>
<div class="abs td" style="left:1781px;top:839px;color:#55d187">查看日志</div>
<!--/TABLE-->
<!--PAG-->
<div class="abs" style="left:1309px;top:896px;line-height:20px;color:#dcdcdc;white-space:nowrap">共 19400 条数据</div>
<div class="abs pg" style="left:1422px;background:#0960bd;color:#fff">1</div>
<div class="abs pg" style="left:1454px">2</div>
<div class="abs pg" style="left:1486px">3</div>
<div class="abs pg" style="left:1518px">4</div>
<div class="abs pg" style="left:1550px">5</div>
<svg class="abs" style="left:1584px;top:903px" width="20" height="5" viewBox="0 0 20 5" fill="#6e6e6e"><circle cx="2.5" cy="2.5" r="1.8"/><circle cx="10" cy="2.5" r="1.8"/><circle cx="17.5" cy="2.5" r="1.8"/></svg>
<div class="abs pg" style="left:1614px;width:44px;color:#8a8a8a">1940</div>
<div class="abs pg" style="left:1666px"><svg style="position:absolute;left:8px;top:7px" width="8" height="10" viewBox="0 0 8 10"><polyline points="1.5,1 6,5 1.5,9" fill="none" stroke="#d0d0d0" stroke-width="1.3"/></svg></div>
<div class="abs" style="left:1696px;top:894px;width:89px;height:24px;border:1px solid #303030;border-radius:2px"></div>
<div class="abs" style="left:1704px;top:896px;line-height:20px;color:#dcdcdc;white-space:nowrap">10 条/页</div>
<svg class="abs" style="left:1763px;top:902px" width="10" height="7" viewBox="0 0 10 7"><polyline points="1,1 5,5.5 9,1" fill="none" stroke="#3a3a3a" stroke-width="1.1"/></svg>
<div class="abs" style="left:1793px;top:896px;line-height:20px;color:#dcdcdc;white-space:nowrap">跳至</div>
<div class="abs" style="left:1827px;top:895px;width:44px;height:22px;border:1px solid #303030;border-radius:2px"></div>
<div class="abs" style="left:1877px;top:896px;line-height:20px;color:#dcdcdc;white-space:nowrap">页</div>
<div class="abs" style="left:1629px;top:401px;width:12px;height:12px;background:#3f3f41"></div><div class="abs" style="left:1641px;top:401px;width:12px;height:12px;background:#4b4b4b"></div><div class="abs" style="left:1653px;top:401px;width:12px;height:12px;background:#3a3d3f"></div><div class="abs" style="left:1665px;top:401px;width:12px;height:12px;background:#3b3a38"></div><div class="abs" style="left:1677px;top:401px;width:12px;height:12px;background:#3a3d40"></div><div class="abs" style="left:1689px;top:401px;width:12px;height:12px;background:#373a40"></div><div class="abs" style="left:1701px;top:401px;width:6px;height:12px;background:#3a3b3a"></div>
<div class="abs" style="left:1622px;top:595px;width:12px;height:11px;background:#2e2f30"></div><div class="abs" style="left:1634px;top:595px;width:12px;height:11px;background:#2b2e2f"></div><div class="abs" style="left:1646px;top:595px;width:12px;height:11px;background:#262626"></div><div class="abs" style="left:1658px;top:595px;width:12px;height:11px;background:#2a2c2f"></div><div class="abs" style="left:1670px;top:595px;width:12px;height:11px;background:#2c2e30"></div><div class="abs" style="left:1682px;top:595px;width:12px;height:11px;background:#2e2f2f"></div><div class="abs" style="left:1694px;top:595px;width:12px;height:11px;background:#27282a"></div>
<div class="abs" style="left:1622px;top:606px;width:12px;height:11px;background:#282828"></div><div class="abs" style="left:1634px;top:606px;width:12px;height:11px;background:#2e3133"></div><div class="abs" style="left:1646px;top:606px;width:12px;height:11px;background:#2b2d2e"></div><div class="abs" style="left:1658px;top:606px;width:12px;height:11px;background:#232323"></div><div class="abs" style="left:1670px;top:606px;width:12px;height:11px;background:#2c3032"></div><div class="abs" style="left:1682px;top:606px;width:12px;height:11px;background:#272725"></div><div class="abs" style="left:1694px;top:606px;width:12px;height:11px;background:#262627"></div>
<div class="abs" style="left:1622px;top:797px;width:12px;height:12px;background:#333538"></div><div class="abs" style="left:1634px;top:797px;width:12px;height:12px;background:#4d5154"></div><div class="abs" style="left:1646px;top:797px;width:12px;height:12px;background:#3b3f40"></div><div class="abs" style="left:1658px;top:797px;width:12px;height:12px;background:#373737"></div><div class="abs" style="left:1670px;top:797px;width:12px;height:12px;background:#35363a"></div><div class="abs" style="left:1682px;top:797px;width:12px;height:12px;background:#32363b"></div><div class="abs" style="left:1694px;top:797px;width:12px;height:12px;background:#3a3a3a"></div>
<!--/PAG-->
<div id="scrollv"></div>
</body></html>
